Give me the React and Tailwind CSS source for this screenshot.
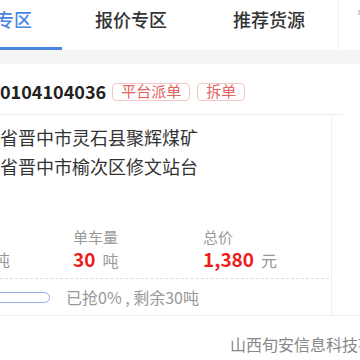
import React from 'react';

const Tab = ({ label, active, first }) => (
    <div className={first ? 'relative w-[62px] flex-none pt-[9px]' : 'relative w-[138px] flex-none pt-[9px] text-center'}>
        <span
            className={
                'block whitespace-nowrap text-[18px] leading-[20px] font-medium ' +
                (active ? 'text-[#4a86e0]' : 'text-[#333]') +
                (first ? ' -ml-1' : '')
            }
        >
            {label}
        </span>
        {active && <div className="absolute left-0 right-0 bottom-0 h-[3px] bg-[#4a86e0]" />}
    </div>
);

const Stat = ({ label, value, unit }) => (
    <div className="w-[130px] flex-none">
        <div className="text-[15px] leading-[20px] text-[#999]">{label}</div>
        <div className="flex items-baseline gap-[7px] leading-[24px] whitespace-nowrap">
            <span className="text-[19px] font-bold text-[#f01c1c]">{value}</span>
            <span className="text-[16px] text-[#999]">{unit}</span>
        </div>
    </div>
);

export default function App() {
    return (
        <div className="w-[360px] h-[360px] overflow-hidden bg-white font-['Noto_Sans_CJK_SC','Noto_Sans',sans-serif] text-[#333]">
            {/* tab bar */}
            <div className="flex h-[50px] bg-white">
                <Tab label="专区" active first />
                <Tab label="报价专区" />
                <Tab label="推荐货源" />
                <div className="w-px flex-none bg-[#eee]" />
                <div className="ml-[19px] mt-[10px] w-[2px] h-[5px] flex-none bg-[#d0d0d0]" />
            </div>
            <div className="h-[14px] bg-[#f5f5f5]" />

            {/* order card */}
            <div className="bg-white">
                <div className="flex items-center gap-[6px] h-[51px] pt-[5px] w-[343px] border-b border-[#eee]">
                    <span className="text-[18px] font-bold text-[#222] whitespace-nowrap">0104104036</span>
                    <span className="h-[18px] px-[8px] flex items-center rounded-[4px] border border-[#f3c8c4] text-[15px] text-[#e5635c]">平台派单</span>
                    <span className="h-[18px] px-[8px] flex items-center rounded-[4px] border border-[#f3c8c4] text-[15px] text-[#e5635c] ml-px">拆单</span>
                </div>

                <div className="flex border-b border-[#eee]">
                    <div className="w-[332px] flex-none border-r border-[#eee]">
                        <div className="pt-[8px] text-[18px] leading-[29px] text-[#333] whitespace-nowrap">
                            <div>省晋中市灵石县聚辉煤矿</div>
                            <div>省晋中市榆次区修文站台</div>
                        </div>

                        <div className="flex mt-[46px]">
                            <div className="w-[73px] flex-none">
                                <div className="h-[20px]" />
                                <div className="leading-[24px] -ml-[6px] text-[16px] text-[#999]">吨</div>
                            </div>
                            <Stat label="单车量" value="30" unit="吨" />
                            <Stat label="总价" value="1,380" unit="元" />
                        </div>

                        <div className="mt-[6px] mr-[2px] border-t border-dashed border-[#ddd]" />

                        <div className="flex items-center h-[36px]">
                            <div className="-ml-[20px] w-[70px] h-[11px] flex-none rounded-full border border-[#8fb2ec] bg-white" />
                            <span className="ml-[16px] text-[16px] text-[#999] whitespace-nowrap">已抢0% , 剩余30吨</span>
                        </div>
                    </div>
                    <div className="flex-1" />
                </div>

                <div className="pt-[17px] pl-[230px] text-[16px] leading-[22px] text-[#888] whitespace-nowrap">
                    山西旬安信息科技有限公司
                </div>
            </div>
        </div>
    );
}
